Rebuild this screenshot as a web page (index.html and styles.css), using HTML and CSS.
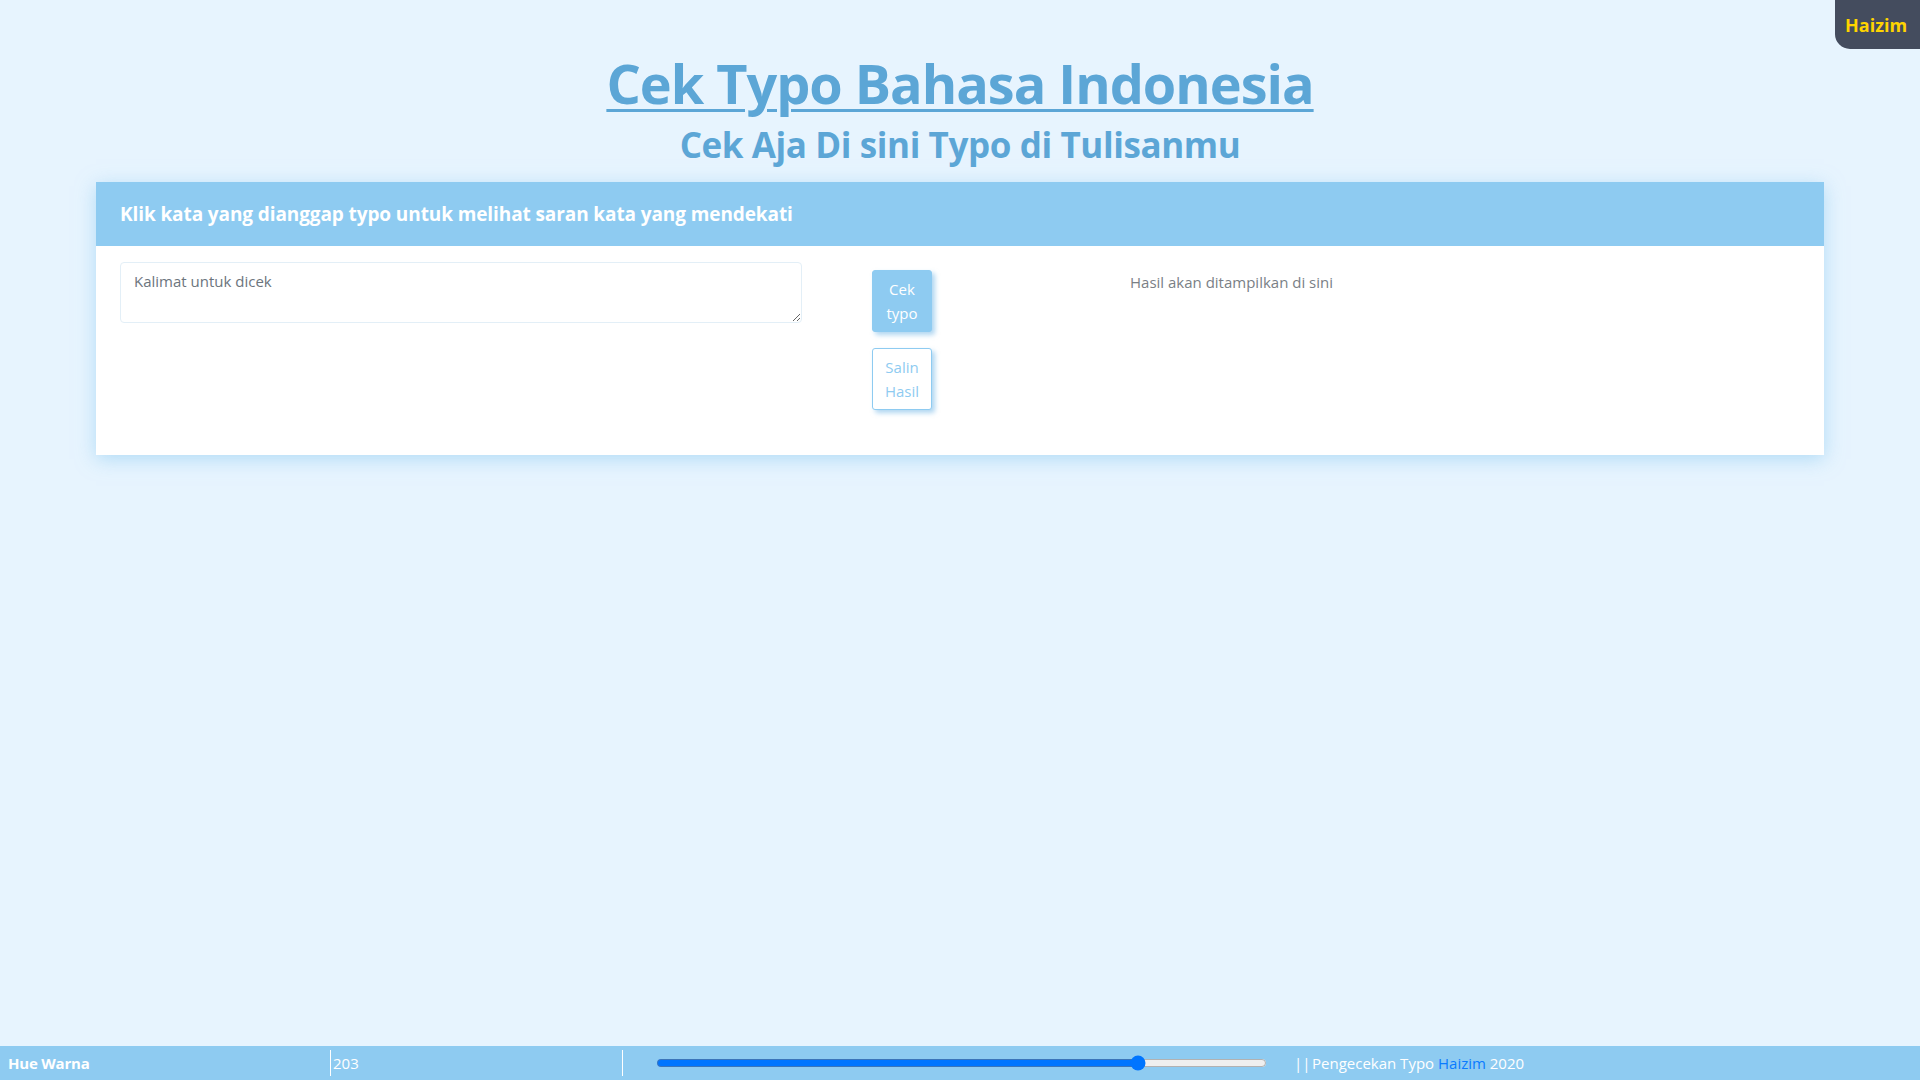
FILE: index.html
```html
<!DOCTYPE html>
<html lang="id">
<head>
<meta charset="utf-8">
<title>Cek Typo Bahasa Indonesia</title>
<link rel="stylesheet" href="styles.css">
</head>
<body>
<div class="badge">Haizim</div>
<main class="main">
  <header class="hero">
    <h1 class="title"><a href="#">Cek Typo Bahasa Indonesia</a></h1>
    <h2 class="subtitle">Cek Aja Di sini Typo di Tulisanmu</h2>
  </header>
  <section class="card">
    <div class="card-head">
      <h5 class="card-title">Klik kata yang dianggap typo untuk melihat saran kata yang mendekati</h5>
    </div>
    <div class="card-body">
      <textarea class="input" placeholder="Kalimat untuk dicek"></textarea>
      <div class="actions">
        <button class="btn btn-fill">Cek typo</button>
        <button class="btn btn-outline">Salin Hasil</button>
      </div>
      <div class="result">Hasil akan ditampilkan di sini</div>
    </div>
  </section>
</main>
<footer class="bar">
  <div class="cell label">Hue Warna</div>
  <div class="cell val">203</div>
  <div class="cell tail">
    <input class="range" type="range" min="0" max="255" value="203">
    <span class="credit">||&#8202;Pengecekan Typo <span class="blue">Haizim</span> 2020</span>
  </div>
</footer>
</body>
</html>
```
FILE: styles.css
```css
* { box-sizing: border-box; }
html, body { height: 100%; }
body {
  margin: 0;
  background: #e7f4fe;
  font-family: "Open Sans", "Liberation Sans", sans-serif;
  color: #555;
  display: flex;
  flex-direction: column;
  min-height: 100vh;
}
.main { flex: 1; }
.badge {
  position: absolute;
  top: 0;
  right: 0;
  width: 85px;
  height: 49px;
  background: #444c5e;
  border-bottom-left-radius: 15px;
  color: #ffd400;
  font-weight: 700;
  font-size: 18px;
  line-height: 51px;
  padding-left: 10px;
}
.hero { text-align: center; padding-top: 51px; }
.title {
  margin: 0;
  font-size: 54px;
  line-height: 64px;
  font-weight: 700;
  letter-spacing: -1px;
}
.title a { color: #5ca6d6; text-decoration: underline; text-decoration-thickness: 3px; text-underline-offset: 5px; }
.subtitle {
  margin: 8px 0 0;
  font-size: 35px;
  line-height: 44px;
  font-weight: 700;
  color: #5ca6d6;
  letter-spacing: -0.4px;
}
.card {
  width: 1728px;
  margin: 15px auto 0;
  background: #fff;
  box-shadow: 0 4px 18px rgba(142, 203, 241, 0.6);
}
.card-head {
  background: #8ecbf1;
  height: 64px;
  padding: 0 24px;
  display: flex;
  align-items: center;
}
.card-title {
  margin: 0;
  color: #fff;
  font-size: 19px;
  font-weight: 700;
  letter-spacing: -0.1px;
}
.card-body {
  display: flex;
  align-items: flex-start;
  padding: 16px 24px 45px;
}
.input {
  width: 682px;
  height: 61px;
  border: 1px solid #e3eff7;
  border-radius: 4px;
  padding: 8px 13px;
  font-family: inherit;
  font-size: 15px;
  color: #495057;
  resize: vertical;
}
.input::placeholder { color: #6c757d; }
.actions {
  margin-left: 70px;
  margin-top: 8px;
  display: flex;
  flex-direction: column;
  gap: 16px;
}
.btn {
  width: 60px;
  padding: 6px 0;
  border-radius: 3px;
  font-family: inherit;
  font-size: 15px;
  line-height: 24px;
  text-align: center;
  box-shadow: 3px 3px 5px rgba(110, 180, 230, 0.55);
}
.btn-fill { background: #8ecbf1; color: #fff; border: 1px solid #8ecbf1; }
.btn-outline { background: #fff; color: #8ecbf1; border: 1px solid #8ecbf1; }
.result {
  margin-left: 198px;
  margin-top: 8px;
  font-size: 15px;
  line-height: 24px;
  color: #7a7f86;
}
.bar {
  height: 34px;
  background: #8ecbf1;
  display: grid;
  grid-template-columns: 330px 292px 1fr;
  align-items: center;
  color: #fff;
  font-size: 15px;
}
.cell { display: flex; align-items: center; height: 26px; }
.label { padding-left: 8px; font-weight: 700; letter-spacing: -0.2px; }
.val, .tail { border-left: 1px solid #fff; padding-left: 2px; }
.range { width: 611px; margin: 0 0 0 31px; }
.credit { margin-left: 27px; }
.blue { color: #0a7bff; }
```
